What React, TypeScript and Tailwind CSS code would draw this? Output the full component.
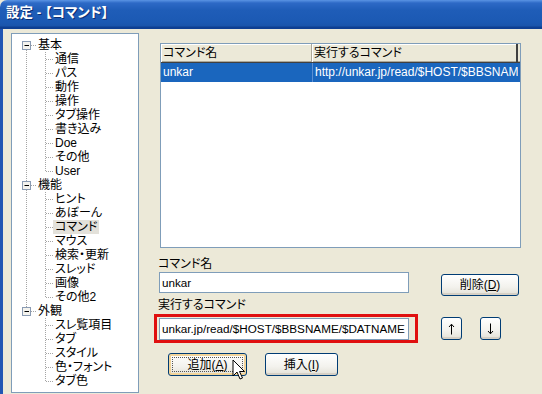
import React from "react";

type Node = { label: string; root?: boolean };

const nodes: Node[] = [
  { label: "基本", root: true },
  { label: "通信" },
  { label: "パス" },
  { label: "動作" },
  { label: "操作" },
  { label: "タブ操作" },
  { label: "書き込み" },
  { label: "Doe" },
  { label: "その他" },
  { label: "User" },
  { label: "機能", root: true },
  { label: "ヒント" },
  { label: "あぼーん" },
  { label: "コマンド" },
  { label: "マウス" },
  { label: "検索・更新" },
  { label: "スレッド" },
  { label: "画像" },
  { label: "その他2" },
  { label: "外観", root: true },
  { label: "スレ覧項目" },
  { label: "タブ" },
  { label: "スタイル" },
  { label: "色・フォント" },
  { label: "タブ色" },
];

const dot = { stroke: "#a5a5a5", strokeWidth: 1, strokeDasharray: "1 1" };

function RootGuide({ first, last }: { first: boolean; last: boolean }) {
  return (
    <svg width="19" height="14" className="shrink-0">
      {!first && <line x1="9.5" y1="0" x2="9.5" y2="3" {...dot} />}
      {!last && <line x1="9.5" y1="12" x2="9.5" y2="14" {...dot} />}
      <line x1="14" y1="7.5" x2="19" y2="7.5" {...dot} />
      <rect x="5.5" y="3.5" width="8" height="8" fill="#f4f3ee" stroke="#8a9bb3" />
      <line x1="7.5" y1="7.5" x2="12" y2="7.5" stroke="#000" />
    </svg>
  );
}

function ChildGuide({ parentLine, lastChild }: { parentLine: boolean; lastChild: boolean }) {
  return (
    <>
      <svg width="19" height="14" className="shrink-0">
        {parentLine && <line x1="9.5" y1="0" x2="9.5" y2="14" {...dot} />}
      </svg>
      <svg width="17" height="14" className="shrink-0">
        <line x1="9.5" y1="0" x2="9.5" y2={lastChild ? 8 : 14} {...dot} />
        <line x1="10" y1="7.5" x2="17" y2="7.5" {...dot} />
      </svg>
    </>
  );
}

function Tree() {
  const rootIdx = nodes.map((n, i) => (n.root ? i : -1)).filter((i) => i >= 0);
  const lastRoot = rootIdx[rootIdx.length - 1];
  return (
    <div className="w-[128px] h-[360px] shrink-0 bg-white border border-[#7f9db9] pl-[5px] pt-[4px] overflow-hidden">
      {nodes.map((n, i) => {
        if (n.root) {
          return (
            <div key={i} className="flex h-[14px] items-center">
              <RootGuide first={i === 0} last={i === lastRoot} />
              <span className="ml-[1px] px-[1px] leading-[14px]">{n.label}</span>
            </div>
          );
        }
        const next = nodes[i + 1];
        const lastChild = !next || !!next.root;
        const inLastGroup = i > lastRoot;
        return (
          <div key={i} className="flex h-[14px] items-center">
            <ChildGuide parentLine={!inLastGroup} lastChild={lastChild} />
            <span
              className={
                "px-[2px] leading-[14px] " + (n.label === "コマンド" ? "bg-[#e3e1da]" : "")
              }
            >
              {n.label}
            </span>
          </div>
        );
      })}
    </div>
  );
}

function XpButton({
  children,
  className = "",
  focused = false,
}: {
  children: React.ReactNode;
  className?: string;
  focused?: boolean;
}) {
  return (
    <div
      className={
        "flex items-center justify-center rounded-[3px] border border-[#003c74] bg-[linear-gradient(to_bottom,#ffffff,#f3f2ed_60%,#e3e1d7)] text-[12px] leading-none " +
        (focused ? "shadow-[inset_0_0_0_2px_#f2d49a] " : "shadow-[inset_0_-2px_0_#d6d0c5] ") +
        className
      }
    >
      {focused ? (
        <div className="flex h-[calc(100%-6px)] w-[calc(100%-6px)] items-center justify-center border border-dotted border-[#555]">
          {children}
        </div>
      ) : (
        children
      )}
    </div>
  );
}

function Arrow({ down = false }: { down?: boolean }) {
  return (
    <svg width="7" height="12" viewBox="0 0 7 12" className={down ? "rotate-180" : ""}>
      <path d="M3.5 1.5 V11.5" stroke="#000" strokeWidth="1" />
      <path d="M1 4 L3.5 1.2 L6 4" stroke="#000" fill="none" strokeWidth="1" />
    </svg>
  );
}

function Cursor() {
  return (
    <svg
      width="14"
      height="22"
      viewBox="0 0 14 22"
      className="absolute left-[232px] top-[359px]"
    >
      <path
        d="M1 1 L1 17 L5 13 L8 20 L10.5 19 L7.5 12.5 L12.5 12.5 Z"
        fill="#fff"
        stroke="#000"
        strokeWidth="1"
        strokeLinejoin="miter"
      />
    </svg>
  );
}

export default function App() {
  return (
    <div
      className="relative w-[542px] h-[394px] overflow-hidden bg-[#ece9d8] flex flex-col text-black [font-feature-settings:'palt'] text-[12px]"
      style={{ fontFamily: '"Liberation Sans", "Noto Sans CJK JP", sans-serif' }}
    >
      <header className="h-[29px] shrink-0 rounded-tl-[7px] bg-[linear-gradient(to_bottom,#5a94e4_0px,#2d69c6_3px,#1f5db8_10px,#1b59b3_22px,#1a55ab_26px,#0e3f92_27px,#0e3f92_29px)] flex items-center pl-[6px] pb-[2px]">
        <span className="text-white font-bold text-[13.5px] [text-shadow:1px_1px_0_#0b2e74]">
          設定 - 【コマンド】
        </span>
      </header>

      <main className="flex flex-1 border-l-[3px] border-l-[#2156b4] pl-[8px] pt-[4px]">
        <Tree />

        <section className="ml-[19px] flex flex-col">
          <div className="ml-[2px] mt-[10px] w-[361px] h-[205px] bg-white border border-[#7f9db9] overflow-hidden">
            <div className="flex h-[19px] bg-[#ece9d8] border-b border-b-[#404040] shadow-[inset_0_-1px_0_#aca899]">
              <div className="w-[151px] pl-[2px] leading-[18px] border-r border-r-[#aca899] shadow-[inset_1px_1px_0_#fff]">
                コマンド名
              </div>
              <div className="w-[206px] pl-[2px] leading-[18px] border-r-[2px] border-r-[#404040] shadow-[inset_1px_1px_0_#fff]">
                実行するコマンド
              </div>
            </div>
            <div className="flex h-[19px] bg-[#1a66be] text-white text-[12px] whitespace-nowrap">
              <div className="w-[151px] pl-[2px] leading-[19px]">unkar</div>
              <div className="w-[206px] pl-[2px] leading-[19px] overflow-hidden border-l border-l-[#5b8fd3]">
                http://unkar.jp/read/$HOST/$BBSNAM
              </div>
            </div>
          </div>

          <div className="mt-[9px] leading-[14px]">コマンド名</div>
          <div className="flex items-start">
            <div className="ml-[1px] mt-[1px] w-[250px] h-[21px] bg-white border border-[#7f9db9] pl-[2px] text-[11.7px] leading-[19px]">
              unkar
            </div>
            <XpButton className="ml-[32px] mt-[3px] w-[78px] h-[22px]">
              <span>
                削除(<span className="underline">D</span>)
              </span>
            </XpButton>
          </div>

          <div className="mt-[2px] leading-[14px]">実行するコマンド</div>
          <div className="flex items-start mt-[2px]">
            <div className="-ml-[4px] w-[264px] h-[29px] border-[3px] border-[#e01010] flex items-center pl-[2px]">
              <div className="w-[250px] h-[22px] bg-white border border-[#7f9db9] pl-[2px] text-[11.7px] leading-[20px] whitespace-nowrap overflow-hidden">
                unkar.jp/read/$HOST/$BBSNAME/$DATNAME
              </div>
            </div>
            <XpButton className="ml-[23px] mt-[3px] w-[21px] h-[23px]">
              <Arrow />
            </XpButton>
            <XpButton className="ml-[18px] mt-[3px] w-[21px] h-[23px]">
              <Arrow down />
            </XpButton>
          </div>

          <div className="flex mt-[10px] ml-[10px]">
            <XpButton focused className="w-[79px] h-[23px]">
              <span>
                追加(<span className="underline">A</span>)
              </span>
            </XpButton>
            <XpButton className="ml-[18px] w-[73px] h-[23px]">
              <span>
                挿入(<span className="underline">I</span>)
              </span>
            </XpButton>
          </div>
        </section>
      </main>

      <Cursor />
    </div>
  );
}
